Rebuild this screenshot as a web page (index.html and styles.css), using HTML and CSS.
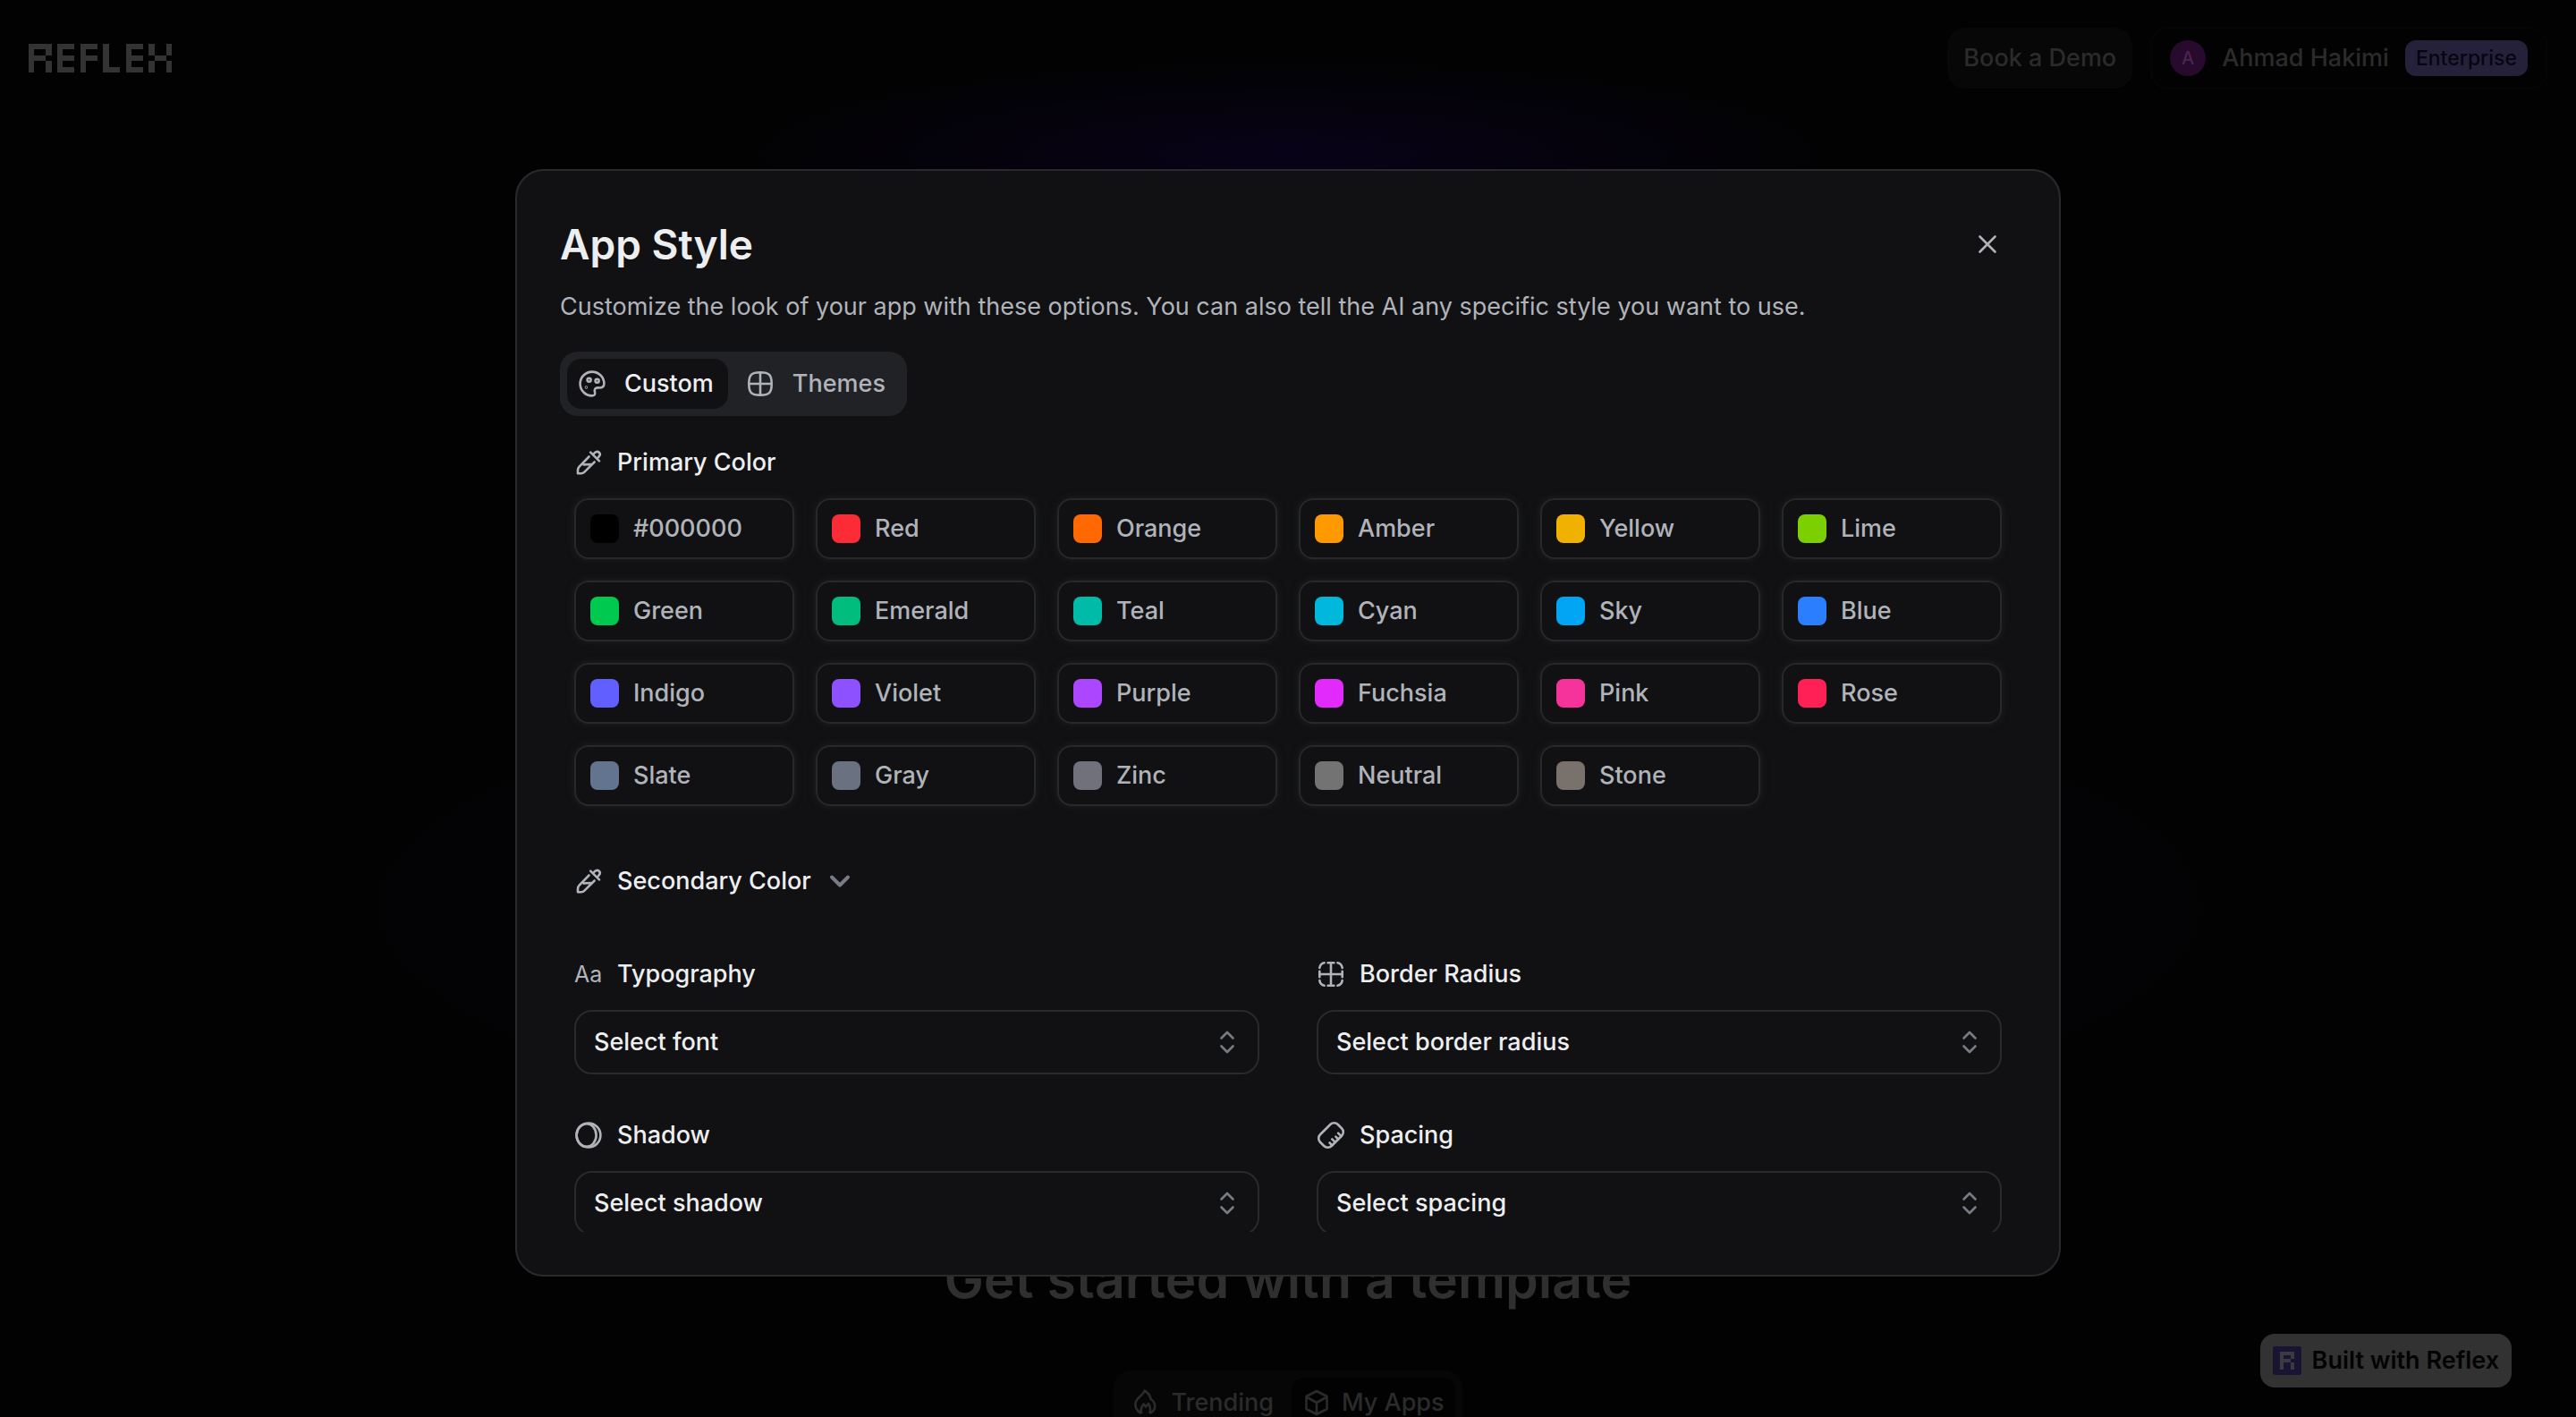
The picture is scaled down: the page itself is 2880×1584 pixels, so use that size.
FILE: index.html
```html
<!DOCTYPE html>
<html lang="en">
<head>
<meta charset="utf-8">
<meta name="viewport" content="width=device-width, initial-scale=1">
<title>Reflex Build</title>
<link rel="stylesheet" href="styles.css">
</head>
<body>
<svg class="sprite" aria-hidden="true">
  <symbol id="i-dropper" viewBox="0 0 32 32"><path d="M16.5 9.5 5.6 20.6Q4 22.3 4 24.5V28.2H7.6Q9.8 28.2 11.4 26.6L22.6 15.5M10.6 18.4 18.6 18M18.2 4.6 28 14.4M21 7.2 23 5C26.5 2 30.8 6 27.6 9.4L25.4 11.8"/></symbol>
  <symbol id="i-palette" viewBox="0 0 32 32"><path d="M16 2.6A13.4 13.4 0 0 0 16 29.4C19 29.4 19.6 27.6 19 25.2 18.2 21.8 19.6 20.2 22.8 20.4 27 20.8 29.4 19.6 29.4 16A13.4 13.4 0 0 0 16 2.6Z"/><circle cx="12.6" cy="11.8" r="2"/><circle cx="21.6" cy="12.8" r="2"/><circle cx="9.4" cy="20" r=".4"/></symbol>
  <symbol id="i-grid" viewBox="0 0 32 32"><path d="M16 3.3C26 3.3 28.7 6 28.7 16S26 28.7 16 28.7 3.3 26 3.3 16 6 3.3 16 3.3ZM16 3.3V28.7M3.3 16H28.7"/></symbol>
  <symbol id="i-radius" viewBox="0 0 32 32"><path d="M16 3.3V28.7M3.3 16H28.7M12.6 3.3H19.4M12.6 28.7H19.4M3.3 12.8V19.2M28.7 12.8V19.2M3.3 9C3.8 5.8 5.8 3.8 8.6 3.3M23.4 3.3C26.2 3.8 28.2 5.8 28.7 9M28.7 23C28.2 26.2 26.2 28.2 23.4 28.7M8.6 28.7C5.8 28.2 3.8 26.2 3.3 23"/></symbol>
  <symbol id="i-shadow" viewBox="0 0 32 32"><circle cx="16" cy="16" r="13.4"/><ellipse cx="13.6" cy="16" rx="11" ry="12.8"/></symbol>
  <symbol id="i-ruler" viewBox="0 0 32 32"><g transform="rotate(-45 16 16)"><rect x="2" y="7" width="28" height="18" rx="6"/><path d="M9 25V21M13.8 25V20M18.6 25V21M23.4 25V20"/></g></symbol>
  <symbol id="i-close" viewBox="0 0 32 32"><path d="M7.5 7.5 24.5 24.5M24.5 7.5 7.5 24.5"/></symbol>
  <symbol id="i-down" viewBox="0 0 32 32"><path d="M7 11.5 16 20.5 25 11.5"/></symbol>
  <symbol id="i-updown" viewBox="0 0 32 32"><path d="M9.5 11.5 16 5 22.5 11.5M9.5 20.5 16 27 22.5 20.5"/></symbol>
  <symbol id="i-flame" viewBox="0 0 32 32"><path d="M10 27.5C2 22 3.500 14 9 9.500 12 7 14 5 14.500 2.500 19 5 21 8.500 21.500 12 28 16 27.500 24 21.500 27.500M11 27C9.500 22.500 11.500 20 13.500 17.500L16 20.500 19 17C21 20.500 22 23 20.500 27"/></symbol>
  <symbol id="i-cube" viewBox="0 0 32 32"><path d="M16 3 27.500 9V23L16 29 4.500 23V9ZM4.500 9.500 16 16 27.500 9.500M16 16V29"/></symbol>
</svg>

<header class="topbar">
  <a class="brand" href="#" aria-label="Reflex">
    <svg class="brand-mark" viewBox="0 0 25 5" fill="currentColor" shape-rendering="crispEdges" aria-hidden="true">
      <path d="M0 0h4v2h-1v-1h-2v1h2v1h-2v2h-1zM3 3h1v2h-1zM5 0h3v1h-2v1h2v1h-2v1h2v1h-3zM9 0h3v1h-2v1h2v1h-2v2h-1zM13 0h1v4h2v1h-3zM17 0h3v1h-2v1h2v1h-2v1h2v1h-3zM21 0h1v2h-1zM24 0h1v2h-1zM22 2h2v1h-2zM21 3h1v2h-1zM24 3h1v2h-1z"/>
    </svg>
  </a>
  <div class="topbar-actions">
    <button class="demo" type="button">Book a Demo</button>
    <button class="account" type="button">
      <span class="avatar">A</span>
      <span>Ahmad Hakimi</span>
      <span class="plan">Enterprise</span>
    </button>
  </div>
</header>

<main class="hero"></main>

<section class="templates">
  <h2 class="templates-title">Get started with a template</h2>
  <div class="template-tabs">
    <button class="template-tab" type="button"><svg class="icon"><use href="#i-flame"/></svg>Trending</button>
    <button class="template-tab template-tab-active" type="button"><svg class="icon"><use href="#i-cube"/></svg>My Apps</button>
  </div>
</section>

<a class="built" href="#">
  <svg class="built-mark" viewBox="0 0 32 32" shape-rendering="crispEdges" aria-hidden="true"><rect width="32" height="32" rx="3" fill="#1a1433"/><path fill="#3a3a40" d="M8 6h16v8h-4v-4h-8v4h8v4h-8v8h-4zM20 18h4v8h-4z"/></svg>
  Built with Reflex
</a>

<div class="overlay">
  <div class="dialog" role="dialog" aria-modal="true" aria-labelledby="dialog-title">
    <div class="dialog-head">
      <h1 class="dialog-title" id="dialog-title">App Style</h1>
      <button class="close" type="button" aria-label="Close"><svg class="icon"><use href="#i-close"/></svg></button>
    </div>
    <p class="dialog-text">Customize the look of your app with these options. You can also tell the AI any specific style you want to use.</p>
    <div class="tabs" role="tablist">
      <button class="tab tab-active" type="button" role="tab" aria-selected="true"><svg class="icon"><use href="#i-palette"/></svg>Custom</button>
      <button class="tab" type="button" role="tab" aria-selected="false"><svg class="icon"><use href="#i-grid"/></svg>Themes</button>
    </div>
    <div class="options">
      <section class="group">
        <h2 class="group-title"><svg class="icon"><use href="#i-dropper"/></svg>Primary Color</h2>
        <div class="colors">
          <button class="color" type="button"><span class="chip black"></span>#000000</button>
          <button class="color" type="button"><span class="chip red"></span>Red</button>
          <button class="color" type="button"><span class="chip orange"></span>Orange</button>
          <button class="color" type="button"><span class="chip amber"></span>Amber</button>
          <button class="color" type="button"><span class="chip yellow"></span>Yellow</button>
          <button class="color" type="button"><span class="chip lime"></span>Lime</button>
          <button class="color" type="button"><span class="chip green"></span>Green</button>
          <button class="color" type="button"><span class="chip emerald"></span>Emerald</button>
          <button class="color" type="button"><span class="chip teal"></span>Teal</button>
          <button class="color" type="button"><span class="chip cyan"></span>Cyan</button>
          <button class="color" type="button"><span class="chip sky"></span>Sky</button>
          <button class="color" type="button"><span class="chip blue"></span>Blue</button>
          <button class="color" type="button"><span class="chip indigo"></span>Indigo</button>
          <button class="color" type="button"><span class="chip violet"></span>Violet</button>
          <button class="color" type="button"><span class="chip purple"></span>Purple</button>
          <button class="color" type="button"><span class="chip fuchsia"></span>Fuchsia</button>
          <button class="color" type="button"><span class="chip pink"></span>Pink</button>
          <button class="color" type="button"><span class="chip rose"></span>Rose</button>
          <button class="color" type="button"><span class="chip slate"></span>Slate</button>
          <button class="color" type="button"><span class="chip gray"></span>Gray</button>
          <button class="color" type="button"><span class="chip zinc"></span>Zinc</button>
          <button class="color" type="button"><span class="chip neutral"></span>Neutral</button>
          <button class="color" type="button"><span class="chip stone"></span>Stone</button>
        </div>
      </section>
      <button class="group-title group-toggle" type="button" aria-expanded="false"><svg class="icon"><use href="#i-dropper"/></svg>Secondary Color<svg class="icon icon-bold"><use href="#i-down"/></svg></button>
      <div class="fields">
        <div class="group">
          <label class="group-title" for="font"><span class="icon-text" aria-hidden="true">Aa</span>Typography</label>
          <div class="select"><select id="font"><option>Select font</option></select><svg class="icon"><use href="#i-updown"/></svg></div>
        </div>
        <div class="group">
          <label class="group-title" for="radius"><svg class="icon"><use href="#i-radius"/></svg>Border Radius</label>
          <div class="select"><select id="radius"><option>Select border radius</option></select><svg class="icon"><use href="#i-updown"/></svg></div>
        </div>
        <div class="group">
          <label class="group-title" for="shadow"><svg class="icon"><use href="#i-shadow"/></svg>Shadow</label>
          <div class="select"><select id="shadow"><option>Select shadow</option></select><svg class="icon"><use href="#i-updown"/></svg></div>
        </div>
        <div class="group">
          <label class="group-title" for="spacing"><svg class="icon"><use href="#i-ruler"/></svg>Spacing</label>
          <div class="select"><select id="spacing"><option>Select spacing</option></select><svg class="icon"><use href="#i-updown"/></svg></div>
        </div>
      </div>
    </div>
  </div>
</div>
</body>
</html>
```
FILE: styles.css
```css
:root {
  --text: #edeef0;
  --muted: #b0b4ba;
  --faint: #777b84;
  --surface: #111113;
  --line: #292a2e;
}

* { box-sizing: border-box; }

body {
  margin: 0;
  height: 100vh;
  overflow: hidden;
  display: flex;
  flex-direction: column;
  background:
    radial-gradient(ellipse 22% 7% at 50% 11%, #080218, transparent),
    radial-gradient(ellipse 37% 18% at 50% 64%, #030306 0 90%, transparent),
    #020202;
  color: #2b2b2c;
  font: 500 27px/40px Inter, "Liberation Sans", sans-serif;
}

h1, h2, p { margin: 0; }

button {
  margin: 0;
  padding: 0;
  border: 0;
  background: none;
  color: inherit;
  font: inherit;
  cursor: pointer;
}

a { color: inherit; text-decoration: none; }

.sprite { display: none; }

.icon {
  flex: none;
  width: 32px;
  height: 32px;
  fill: none;
  stroke: currentColor;
  stroke-width: 2.6;
  stroke-linecap: round;
  stroke-linejoin: round;
}

.icon-bold { stroke-width: 4; }

/* Page behind the dialog */

.topbar {
  display: flex;
  align-items: center;
  justify-content: space-between;
  padding: 30px 32px 32px;
}

.brand { display: block; color: #333; }
.brand-mark { display: block; width: 160px; height: 32px; }

.topbar-actions { display: flex; align-items: center; gap: 20px; }

.demo {
  padding: 14px 18px;
  border-radius: 20px;
  background: #070707;
}

.account {
  display: flex;
  align-items: center;
  gap: 18px;
  padding: 13px 20px;
  border: 2px solid #050505;
  border-radius: 20px;
}

.avatar {
  width: 40px;
  height: 40px;
  border-radius: 50%;
  background: #270a2e;
  color: #4a2450;
  font-size: 20px;
}

.plan {
  padding: 0 12px;
  border-radius: 12px;
  background: #25213a;
  color: #060510;
  font-size: 23px;
}

.hero { flex: 1; }

.templates {
  display: flex;
  flex-direction: column;
  align-items: center;
  gap: 62px;
  margin-bottom: -20px;
}

.templates-title {
  color: #2f2f30;
  font-size: 59px;
  font-weight: 600;
  line-height: 80px;
}

.template-tabs {
  display: flex;
  gap: 8px;
  padding: 8px;
  border-radius: 20px;
  background: #060606;
}

.template-tab {
  display: flex;
  align-items: center;
  gap: 12px;
  height: 56px;
  padding: 0 12px;
  border-radius: 14px;
}

.template-tab-active { background: #020202; }

.built {
  position: fixed;
  right: 72px;
  bottom: 33px;
  display: flex;
  align-items: center;
  gap: 12px;
  height: 60px;
  padding: 0 14px;
  border-radius: 16px;
  background: #323232;
  color: #030303;
  font-weight: 600;
}

.built-mark { width: 32px; height: 32px; }

/* Dialog */

.overlay {
  position: fixed;
  inset: 0;
  display: flex;
  align-items: flex-start;
  justify-content: center;
  padding: 189px 0 157px;
}

.dialog {
  display: flex;
  flex-direction: column;
  width: 60%;
  height: 100%;
  padding: 48px;
  border: 2px solid var(--line);
  border-radius: 32px;
  background: var(--surface);
  color: var(--text);
}

.dialog-head {
  display: flex;
  align-items: center;
  justify-content: space-between;
  margin-bottom: 16px;
}

.dialog-title {
  font-size: 46px;
  font-weight: 600;
  line-height: 68px;
}

.close {
  display: grid;
  place-items: center;
  width: 64px;
  height: 64px;
  color: var(--muted);
}

.dialog-text {
  margin-bottom: 30px;
  color: var(--muted);
  font-weight: 400;
}

.tabs {
  display: flex;
  align-self: flex-start;
  gap: 8px;
  padding: 8px;
  border-radius: 20px;
  background: #212225;
}

.tab {
  display: flex;
  align-items: center;
  gap: 20px;
  height: 56px;
  padding: 0 16px 0 12px;
  border-radius: 16px;
  color: var(--muted);
}

.tab-active { background: var(--surface); color: var(--text); }
.tab-active .icon { color: var(--muted); }

.options {
  flex: 1;
  min-height: 0;
  display: flex;
  flex-direction: column;
  gap: 64px;
  padding: 32px 16px;
  overflow-y: auto;
  scrollbar-width: none;
}

.options > * { flex: none; }

.group { display: grid; gap: 20px; }

.group-title {
  display: flex;
  align-items: center;
  gap: 16px;
  font-size: 27px;
  font-weight: 500;
  line-height: 40px;
}

.group-title .icon { color: var(--muted); }
.group-title .icon-bold { color: var(--faint); }
.group-toggle { align-self: flex-start; }

.icon-text {
  width: 32px;
  color: var(--muted);
  font-size: 25px;
  font-weight: 400;
}

.colors {
  display: grid;
  grid-template-columns: repeat(6, 1fr);
  gap: 24px;
}

.color {
  display: flex;
  align-items: center;
  gap: 16px;
  height: 68px;
  padding: 0 16px;
  border: 2px solid #26282b;
  border-radius: 16px;
  box-shadow: 0 0 8px #1f2123;
  color: var(--muted);
}

.chip { width: 32px; height: 32px; border-radius: 8px; }

.black { background: #000; }
.red { background: #fb2c36; }
.orange { background: #ff6900; }
.amber { background: #fe9a00; }
.yellow { background: #f0b100; }
.lime { background: #7ccf00; }
.green { background: #00c950; }
.emerald { background: #00bc7d; }
.teal { background: #00bba7; }
.cyan { background: #00b8db; }
.sky { background: #00a6f4; }
.blue { background: #2b7fff; }
.indigo { background: #615fff; }
.violet { background: #8e51ff; }
.purple { background: #ad46ff; }
.fuchsia { background: #e12afb; }
.pink { background: #f6339a; }
.rose { background: #ff2056; }
.slate { background: #62748e; }
.gray { background: #6a7282; }
.zinc { background: #71717b; }
.neutral { background: #737373; }
.stone { background: #79716b; }

.fields {
  display: grid;
  grid-template-columns: 1fr 1fr;
  gap: 48px 64px;
}

.select {
  display: grid;
  grid-template-columns: 1fr 72px;
  align-items: center;
}

.select select {
  grid-area: 1 / 1 / 2 / 3;
  appearance: none;
  width: 100%;
  height: 72px;
  margin: 0;
  padding: 0 20px;
  border: 2px solid var(--line);
  border-radius: 20px;
  background: var(--surface);
  color: var(--text);
  font: inherit;
}

.select .icon {
  grid-area: 1 / 2;
  justify-self: center;
  color: var(--faint);
  pointer-events: none;
}
```
